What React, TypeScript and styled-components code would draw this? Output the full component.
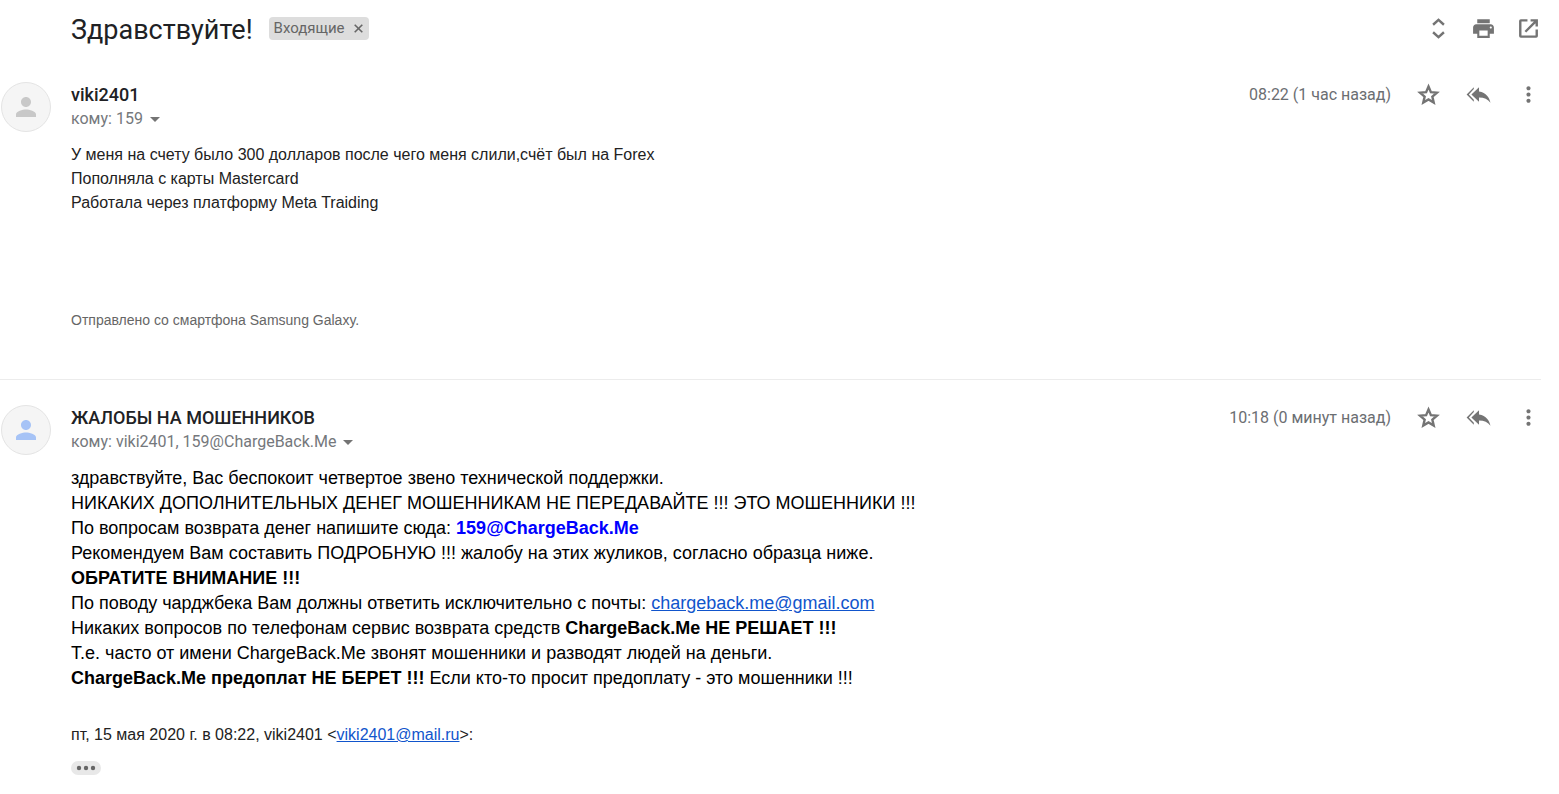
import React from "react";
import styled, { createGlobalStyle } from "styled-components";

const GlobalStyle = createGlobalStyle`
  *, *::before, *::after { box-sizing: border-box; }
  body {
    margin: 0;
    background: #fff;
    color: #222;
    font-family: Roboto, "Liberation Sans", sans-serif;
  }
`;

const Page = styled.main`
  padding-right: 18px;
`;

const ThreadHeader = styled.header`
  display: flex;
  align-items: center;
  height: 57px;
  padding-left: 71px;
`;

const Subject = styled.h1`
  margin: 0;
  padding-top: 2px;
  color: #202124;
  font-size: 27px;
  font-weight: 400;
  line-height: 36px;
`;

const Label = styled.span`
  display: flex;
  align-items: center;
  gap: 8px;
  height: 23px;
  margin: 0 auto 0 16px;
  padding: 0 5px;
  border-radius: 4px;
  background: #ddd;
  color: #666;
  font-size: 15px;
  line-height: 23px;
`;

const LabelRemove = styled.button`
  display: flex;
  padding: 0;
  border: 0;
  background: none;
  color: inherit;
  cursor: pointer;
`;

const Actions = styled.div<{ $gap: number }>`
  display: flex;
  align-items: center;
  gap: ${({ $gap }) => $gap}px;
`;

const IconButton = styled.button`
  display: flex;
  padding: 0;
  border: 0;
  background: none;
  color: #747474;
  cursor: pointer;
`;

const MessageCard = styled.article<{ $divided?: boolean }>`
  display: flex;
  align-items: flex-start;
  gap: 20px;
  padding: 25px 0 0 1px;
  border-bottom: ${({ $divided }) => ($divided ? "1px solid #ececec" : "0")};
`;

const Avatar = styled.div<{ $color: string }>`
  display: flex;
  flex: none;
  align-items: center;
  justify-content: center;
  width: 50px;
  height: 50px;
  border: 1px solid #e4e4e4;
  border-radius: 50%;
  background: #f5f5f5;
  color: ${({ $color }) => $color};
`;

const MessageMain = styled.div`
  flex: 1;
  min-width: 0;
`;

const MessageTop = styled.div`
  display: flex;
  align-items: center;
  justify-content: space-between;
  height: 25px;
`;

const Sender = styled.h2`
  margin: 0;
  color: #202124;
  font-size: 18px;
  font-weight: 500;
  line-height: 25px;
`;

const Time = styled.time`
  color: #6b6e72;
  font-size: 16px;
  line-height: 25px;
`;

const Recipients = styled.div`
  display: flex;
  align-items: center;
  gap: 7px;
  height: 24px;
  color: #75787c;
  font-size: 16px;
  line-height: 24px;
`;

const Text = styled.div`
  padding-top: 12px;
  font-family: "Liberation Sans", Arial, sans-serif;
  font-size: 16px;
  line-height: 24px;
  p { margin: 0; }
`;

const Reply = styled.div`
  padding-top: 12px;
  color: #000;
  font-family: "Liberation Sans", Arial, sans-serif;
  font-size: 18px;
  line-height: 25px;
  p { margin: 0; }
`;

const Signature = styled.div`
  padding: 93px 0 47px;
  color: #666;
  font-family: "Liberation Sans", Arial, sans-serif;
  font-size: 14px;
  line-height: 24px;
`;

const Quote = styled.div`
  padding-top: 32px;
  font-family: "Liberation Sans", Arial, sans-serif;
  font-size: 16px;
  line-height: 24px;
`;

const MailLink = styled.a`
  color: #15c;
`;

const StrongLink = styled.a`
  color: #00f;
  font-weight: 700;
  text-decoration: none;
`;

const ExpandButton = styled.button`
  display: flex;
  align-items: center;
  justify-content: center;
  width: 30px;
  height: 14px;
  margin: 14px 0 18px;
  padding: 0;
  border: 0;
  border-radius: 7px;
  background: #e8e8e8;
  color: #666;
  cursor: pointer;
`;

const Icon = ({ path, size = 25 }: { path: string; size?: number }) => (
  <svg width={size} height={size} viewBox="0 0 24 24" fill="currentColor" aria-hidden="true">
    <path d={path} />
  </svg>
);

const LineIcon = ({ path }: { path: string }) => (
  <svg width="25" height="25" viewBox="0 0 24 24" fill="none" stroke="currentColor" strokeWidth="2.3" aria-hidden="true">
    <path d={path} />
  </svg>
);

const icons = {
  unfold: "M6.8 8.400 12 3.700l5.200 4.700M6.8 15.600l5.200 4.700 5.200-4.700",
  print: "M19 8H5c-1.660 0-3 1.340-3 3v6h4v4h12v-4h4v-6c0-1.660-1.340-3-3-3zm-3 11H8v-5h8v5zm3-7c-.55 0-1-.45-1-1s.45-1 1-1 1 .45 1 1-.45 1-1 1zm-1-9H6v4h12V3z",
  open: "M11 4.200H4.700q-.6 0-.6.6v14.400q0 .6.6.6h14.600q.6 0 .6-.6V13M14 4.200h5.900V10M19.400 4.700 9 15.100",
  star: "M12 4.300l2.300 5.400 5.800.5-4.400 3.800 1.300 5.700-5-3-5 3 1.300-5.700-4.400-3.800 5.800-.5z",
  replyAll: "M7.500 6.800V5L.6 12l6.900 7v-1.900L2.700 12zM12.500 9V5L5.200 12l7.300 7v-4.100c5 0 8.500 1.600 11 5.100-1-5-4-10-11-11z",
  more: "M12 8c1.100 0 2-.9 2-2s-.9-2-2-2-2 .9-2 2 .9 2 2 2zm0 2c-1.100 0-2 .9-2 2s.9 2 2 2 2-.9 2-2-.9-2-2-2zm0 6c-1.100 0-2 .9-2 2s.9 2 2 2 2-.9 2-2-.9-2-2-2z",
  person: "M12 12c2.210 0 4-1.790 4-4s-1.790-4-4-4-4 1.790-4 4 1.790 4 4 4zm0 2c-2.670 0-8 1.340-8 4v2h16v-2c0-2.660-5.330-4-8-4z",
};

type MessageProps = {
  sender: string;
  recipients: string;
  time: string;
  avatarColor: string;
  divided?: boolean;
  children: React.ReactNode;
};

const Message = ({ sender, recipients, time, avatarColor, divided, children }: MessageProps) => (
  <MessageCard $divided={divided}>
    <Avatar $color={avatarColor}>
      <Icon path={icons.person} size={30} />
    </Avatar>
    <MessageMain>
      <MessageTop>
        <Sender>{sender}</Sender>
        <Actions $gap={25}>
          <Time>{time}</Time>
          <IconButton aria-label="Пометить"><LineIcon path={icons.star} /></IconButton>
          <IconButton aria-label="Ответить всем"><Icon path={icons.replyAll} /></IconButton>
          <IconButton aria-label="Ещё"><Icon path={icons.more} /></IconButton>
        </Actions>
      </MessageTop>
      <Recipients>
        {recipients}
        <IconButton aria-label="Показать детали">
          <svg width="10" height="5" viewBox="0 0 10 5" fill="currentColor" aria-hidden="true">
            <path d="M0 0h10L5 5z" />
          </svg>
        </IconButton>
      </Recipients>
      {children}
    </MessageMain>
  </MessageCard>
);

export default function App() {
  return (
    <Page>
      <GlobalStyle />
      <ThreadHeader>
        <Subject>Здравствуйте!</Subject>
        <Label>
          Входящие
          <LabelRemove aria-label="Удалить ярлык">
            <svg width="11" height="11" viewBox="0 0 11 11" stroke="currentColor" strokeWidth="1.600" aria-hidden="true">
              <path d="M1.700 1.700l7.600 7.600M9.300 1.700l-7.600 7.600" />
            </svg>
          </LabelRemove>
        </Label>
        <Actions $gap={20}>
          <IconButton aria-label="Развернуть все"><LineIcon path={icons.unfold} /></IconButton>
          <IconButton aria-label="Печать"><Icon path={icons.print} /></IconButton>
          <IconButton aria-label="В новом окне"><LineIcon path={icons.open} /></IconButton>
        </Actions>
      </ThreadHeader>

      <Message sender="viki2401" recipients="кому: 159" time="08:22 (1 час назад)" avatarColor="#c8c8c8" divided>
        <Text>
          <p>У меня на счету было 300 долларов после чего меня слили,счёт был на Forex</p>
          <p>Пополняла с карты Mastercard</p>
          <p>Работала через платформу Meta Traiding</p>
        </Text>
        <Signature>Отправлено со смартфона Samsung Galaxy.</Signature>
      </Message>

      <Message
        sender="ЖАЛОБЫ НА МОШЕННИКОВ"
        recipients="кому: viki2401, 159@ChargeBack.Me"
        time="10:18 (0 минут назад)"
        avatarColor="#a6c3f6"
      >
        <Reply>
          <p>здравствуйте, Вас беспокоит четвертое звено технической поддержки.</p>
          <p>НИКАКИХ ДОПОЛНИТЕЛЬНЫХ ДЕНЕГ МОШЕННИКАМ НЕ ПЕРЕДАВАЙТЕ !!! ЭТО МОШЕННИКИ !!!</p>
          <p>По вопросам возврата денег напишите сюда: <StrongLink href="mailto:159@ChargeBack.Me">159@ChargeBack.Me</StrongLink></p>
          <p>Рекомендуем Вам составить ПОДРОБНУЮ !!! жалобу на этих жуликов, согласно образца ниже.</p>
          <p><strong>ОБРАТИТЕ ВНИМАНИЕ !!!</strong></p>
          <p>По поводу чарджбека Вам должны ответить исключительно с почты: <MailLink href="mailto:chargeback.me@gmail.com">chargeback.me@gmail.com</MailLink></p>
          <p>Никаких вопросов по телефонам сервис возврата средств <strong>ChargeBack.Me НЕ РЕШАЕТ !!!</strong></p>
          <p>Т.е. часто от имени ChargeBack.Me звонят мошенники и разводят людей на деньги.</p>
          <p><strong>ChargeBack.Me предоплат НЕ БЕРЕТ !!!</strong> Если кто-то просит предоплату - это мошенники !!!</p>
        </Reply>
        <Quote>
          пт, 15 мая 2020 г. в 08:22, viki2401 &lt;<MailLink href="mailto:viki2401@mail.ru">viki2401@mail.ru</MailLink>&gt;:
        </Quote>
        <ExpandButton aria-label="Показать скрытый текст">
          <svg width="20" height="6" viewBox="0 0 20 6" fill="currentColor" aria-hidden="true">
            <circle cx="3" cy="3" r="2.200" />
            <circle cx="10" cy="3" r="2.200" />
            <circle cx="17" cy="3" r="2.200" />
          </svg>
        </ExpandButton>
      </Message>
    </Page>
  );
}
